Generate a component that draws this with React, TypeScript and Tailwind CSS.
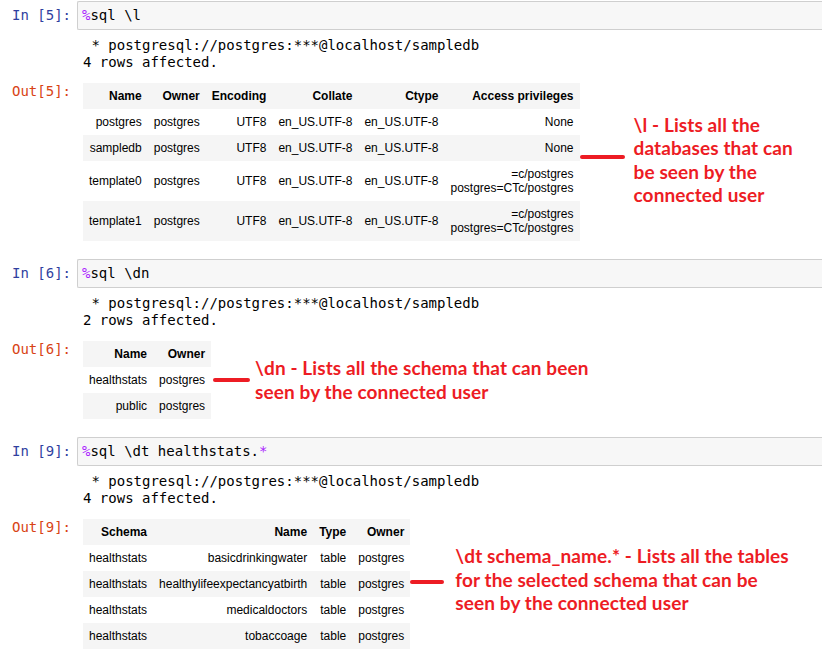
const mono = "font-['DejaVu_Sans_Mono',monospace]"

type Table = { head: string[]; rows: string[][] }

const databases: Table = {
  head: ['Name', 'Owner', 'Encoding', 'Collate', 'Ctype', 'Access privileges'],
  rows: [
    ['postgres', 'postgres', 'UTF8', 'en_US.UTF-8', 'en_US.UTF-8', 'None'],
    ['sampledb', 'postgres', 'UTF8', 'en_US.UTF-8', 'en_US.UTF-8', 'None'],
    ['template0', 'postgres', 'UTF8', 'en_US.UTF-8', 'en_US.UTF-8', '=c/postgres\npostgres=CTc/postgres'],
    ['template1', 'postgres', 'UTF8', 'en_US.UTF-8', 'en_US.UTF-8', '=c/postgres\npostgres=CTc/postgres'],
  ],
}

const schemas: Table = {
  head: ['Name', 'Owner'],
  rows: [
    ['healthstats', 'postgres'],
    ['public', 'postgres'],
  ],
}

const tables: Table = {
  head: ['Schema', 'Name', 'Type', 'Owner'],
  rows: [
    ['healthstats', 'basicdrinkingwater', 'table', 'postgres'],
    ['healthstats', 'healthylifeexpectancyatbirth', 'table', 'postgres'],
    ['healthstats', 'medicaldoctors', 'table', 'postgres'],
    ['healthstats', 'tobaccoage', 'table', 'postgres'],
  ],
}

function ResultTable({ table }: { table: Table }) {
  return (
    <table className="border-collapse font-['Liberation_Sans',Arial,sans-serif] text-[12px] leading-[14px] text-black">
      <tbody>
        <tr className="bg-[#f5f5f5]">
          {table.head.map((h) => (
            <th key={h} className="px-[6px] py-[6px] text-right font-bold">
              {h}
            </th>
          ))}
        </tr>
        {table.rows.map((row, i) => (
          <tr key={i} className={i % 2 === 1 ? 'bg-[#f5f5f5]' : ''}>
            {row.map((cell, j) => (
              <td key={j} className="whitespace-pre px-[6px] py-[6px] text-right align-middle">
                {cell}
              </td>
            ))}
          </tr>
        ))}
      </tbody>
    </table>
  )
}

function Note({
  lines,
  textTop,
  dashTop,
  dashWidth,
  gap,
  leading,
}: {
  lines: string[]
  textTop: string
  dashTop: string
  dashWidth: string
  gap: string
  leading: string
}) {
  return (
    <div className={`flex items-start ${gap}`}>
      <div className={`${dashTop} ${dashWidth} h-[4px] rounded-full bg-[#ed1c24]`} />
      <div
        className={`${textTop} ${leading} font-['Lato',sans-serif] text-[19px] font-bold tracking-[0.1px] text-[#ed1c24]`}
      >
        {lines.map((l) => (
          <div key={l}>{l}</div>
        ))}
      </div>
    </div>
  )
}

function Cell({
  n,
  code,
  rows,
  table,
  note,
  className = '',
}: {
  n: number
  code: React.ReactNode
  rows: number
  table: Table
  note: React.ReactNode
  className?: string
}) {
  return (
    <div className={className}>
      <div className="flex">
        <div className={`${mono} w-[77px] shrink-0 pr-[6px] pt-[6px] text-right text-[14px] leading-[17px] text-[#303f9f]`}>
          In [{n}]:
        </div>
        <div
          className={`${mono} h-[29px] flex-1 rounded-l-[2px] border border-r-0 border-[#cfcfcf] bg-[#f7f7f7] pl-[4px] pt-[5px] text-[14px] leading-[17px] text-black`}
        >
          {code}
        </div>
      </div>
      <div className={`${mono} mt-[7px] whitespace-pre pl-[83px] text-[14px] leading-[17px] text-black`}>
        {' * postgresql://postgres:***@localhost/sampledb\n'}
        {rows} rows affected.
      </div>
      <div className="mt-[12px] flex items-start">
        <div className={`${mono} w-[77px] shrink-0 pr-[6px] text-right text-[14px] leading-[17px] text-[#d84315]`}>
          Out[{n}]:
        </div>
        <div className="pl-[6px]">
          <ResultTable table={table} />
        </div>
        {note}
      </div>
    </div>
  )
}

const Magic = () => <span className="text-[#aa22ff]">%</span>

export default function App() {
  return (
    <div className="h-[655px] w-[822px] overflow-hidden bg-white pt-[1px]">
      <Cell
        n={5}
        code={
          <>
            <Magic />
            sql \l
          </>
        }
        rows={4}
        table={databases}
        note={
          <Note
            lines={['\\l - Lists all the', 'databases that can', 'be seen by the', 'connected user']}
            textTop="mt-[30px]"
            dashTop="mt-[72px]"
            dashWidth="w-[45px]"
            gap="gap-[9px]"
            leading="leading-[23.3px]"
          />
        }
      />
      <Cell
        n={6}
        className="mt-[18px]"
        code={
          <>
            <Magic />
            sql \dn
          </>
        }
        rows={2}
        table={schemas}
        note={
          <div className="pl-[2px]">
            <Note
              lines={['\\dn - Lists all the schema that can been', 'seen by the connected user']}
              textTop="mt-[15px]"
              dashTop="mt-[37px]"
              dashWidth="w-[37px]"
              gap="gap-[5px]"
              leading="leading-[24px]"
            />
          </div>
        }
      />
      <Cell
        n={9}
        className="mt-[18px]"
        code={
          <>
            <Magic />
            sql \dt healthstats.<span className="text-[#aa22ff]">*</span>
          </>
        }
        rows={4}
        table={tables}
        note={
          <Note
            lines={[
              '\\dt schema_name.* - Lists all the tables',
              'for the selected schema that can be',
              'seen by the connected user',
            ]}
            textTop="mt-[25px]"
            dashTop="mt-[61px]"
            dashWidth="w-[34px]"
            gap="gap-[11px]"
            leading="leading-[23.5px]"
          />
        }
      />
    </div>
  )
}
